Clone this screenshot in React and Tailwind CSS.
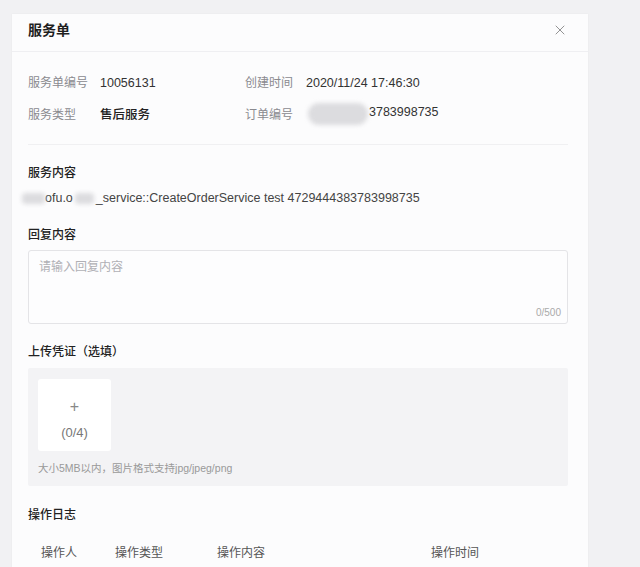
import React from 'react';
import { X } from "lucide-react";

const font = { fontFamily: '"Liberation Sans", "Noto Sans CJK SC", sans-serif' };

const InfoItem = ({ label, children, labelW }) => (
  <div className="flex items-center h-5">
    <span className={`${labelW} text-[12px] text-[#8a8a8f]`}>{label}</span>
    <span className="text-[12.5px] text-[#333]">{children}</span>
  </div>
);

const Blur = ({ className }) => (
  <span className={`inline-block bg-[#dcdcdf] blur-[2px] ${className}`} />
);

export default function App() {
  return (
    <div className="min-h-[567px] bg-[#f1f1f3] pt-[14px] pl-3 overflow-hidden" style={font}>
      <div className="w-[576px] bg-[#fcfcfd] shadow-[0_0_2px_rgba(0,0,0,0.04)] min-h-[560px]">
        {/* Header */}
        <div className="h-[38px] flex items-start justify-between pl-4 pr-5 pt-[6px] border-b border-[#efeff2]">
          <h1 className="text-[14px] leading-5 font-bold text-[#1f1f1f]">服务单</h1>
          <X className="w-[16px] h-[16px] text-[#777] mt-[2px]" strokeWidth={1.2} />
        </div>

        <div className="pl-4 pr-5">
          {/* Info grid */}
          <div className="pt-[21px] pb-[19px] border-b border-[#f0f0f2] flex flex-col gap-3">
            <div className="flex">
              <div className="w-[217px]">
                <InfoItem label="服务单编号" labelW="w-[72px]">10056131</InfoItem>
              </div>
              <InfoItem label="创建时间" labelW="w-[61px]">2020/11/24 17:46:30</InfoItem>
            </div>
            <div className="flex">
              <div className="w-[217px]">
                <InfoItem label="服务类型" labelW="w-[72px]">
                  <span className="font-medium text-[#222]">售后服务</span>
                </InfoItem>
              </div>
              <InfoItem label="订单编号" labelW="w-[61px]">
                <span className="inline-flex items-center">
                  <Blur className="w-[60px] h-[22px] rounded-full ml-[2px] mt-[4px]" />
                  <span className="ml-[1px]">3783998735</span>
                </span>
              </InfoItem>
            </div>
          </div>

          {/* 服务内容 */}
          <div className="mt-[18px] h-5 flex items-center text-[12px] font-medium text-[#222]">服务内容</div>
          <div className="mt-[5px] h-5 flex items-center -ml-[6px] text-[12.5px] text-[#444] whitespace-nowrap">
            <Blur className="w-[23px] h-[11px] rounded-sm" />
            <span>ofu.o</span>
            <Blur className="w-[19px] h-[11px] rounded-sm mx-[2px]" />
            <span>_service::CreateOrderService test 4729444383783998735</span>
          </div>

          {/* 回复内容 */}
          <div className="mt-[17px] h-5 flex items-center text-[12px] font-medium text-[#222]">回复内容</div>
          <div className="mt-[5px] h-[74px] border border-[#e4e4e7] rounded-[3px] bg-[#fdfdfe] relative">
            <div className="pl-[10px] pt-[7px] text-[12px] text-[#b0b0b5]">请输入回复内容</div>
            <div className="absolute right-[6px] bottom-[3px] text-[10px] text-[#aaa]">0/500</div>
          </div>

          {/* 上传凭证 */}
          <div className="mt-[18px] h-5 flex items-center text-[12px] font-medium text-[#222]">上传凭证（选填）</div>
          <div className="mt-[6px] h-[118px] bg-[#f3f3f5] rounded-[2px] px-[10px] pt-[11px]">
            <div className="w-[73px] h-[72px] bg-white rounded-[3px] flex flex-col items-center pt-[20px] text-[#888]">
              <span className="text-[16px] leading-4 font-light">+</span>
              <span className="text-[13px] leading-4 mt-[10px] text-[#777]">(0/4)</span>
            </div>
            <div className="mt-[10px] text-[10.5px] text-[#999]">大小5MB以内，图片格式支持jpg/jpeg/png</div>
          </div>

          {/* 操作日志 */}
          <div className="mt-[19px] h-5 flex items-center text-[12px] font-medium text-[#222]">操作日志</div>
          <div className="mt-[18px] h-5 flex items-center text-[12px] text-[#555] pl-[13px]">
            <span className="w-[74px]">操作人</span>
            <span className="w-[102px]">操作类型</span>
            <span className="w-[214px]">操作内容</span>
            <span>操作时间</span>
          </div>
        </div>
      </div>
    </div>
  );
}
